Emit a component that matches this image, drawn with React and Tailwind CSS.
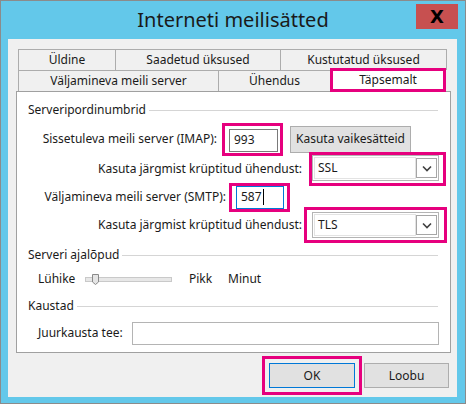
import React from 'react';

function Heading({ children, className = '' }) {
  return (
    <div className={`flex items-center h-[16px] pl-[11px] pr-[12px] ${className}`}>
      <span className="leading-none">{children}</span>
      <div className="flex-1 h-px bg-[#d5d5d5] ml-[3px]" />
    </div>
  );
}

function Chevron() {
  return (
    <svg width="10" height="7" viewBox="0 0 10 7">
      <polyline points="1,1.5 5,5.5 9,1.5" fill="none" stroke="#404040" strokeWidth="1.6" />
    </svg>
  );
}

function Select({ value }) {
  return (
    <div className="w-[127px] h-[26px] border border-[#b4b4b4] bg-white flex items-center">
      <div className="flex-1 h-[22px] ml-[1px] border border-[#e3e3e3] flex items-center pl-[3px]">
        {value}
      </div>
      <div className="w-[21px] h-[20px] mr-[1px] border border-[#a6a6a6] flex items-center justify-center">
        <Chevron />
      </div>
    </div>
  );
}

export default function App() {
  return (
    <div className="w-[466px] h-[404px] bg-[#63c8ea] border border-[#8b8b8b] flex flex-col font-['Noto_Sans',sans-serif] text-[12px] text-[#1a1a1a]">
      {/* title bar */}
      <div className="h-[38px] relative flex items-center justify-center">
        <span className="text-[20px] text-[#1a1a1a]">Interneti meilisätted</span>
        <div className="absolute right-[7px] top-[3px] w-[42px] h-[25px] bg-[#c75050] flex items-center justify-center">
          <span className="text-[18px] font-bold leading-none text-black font-['DejaVu_Sans',sans-serif]">X</span>
        </div>
      </div>

      {/* client area */}
      <div className="ml-[7px] mr-[8px] h-[358px] bg-[#f0f0f0] flex flex-col pt-[10px]">
        {/* tabs */}
        <div className="ml-[10px] w-[431px]">
          <div className="flex h-[21px]">
            <div className="w-[97px] border-t border-l border-[#acacac] flex items-center justify-center">Üldine</div>
            <div className="w-[165px] border-t border-l border-[#acacac] flex items-center justify-center">Saadetud üksused</div>
            <div className="w-[167px] border-t border-l border-r border-[#acacac] flex items-center justify-center">Kustutatud üksused</div>
          </div>
          <div className="flex h-[21px]">
            <div className="w-[200px] border-t border-l border-[#acacac] flex items-center justify-center">Väljamineva meili server</div>
            <div className="w-[112px] border-t border-l border-[#acacac] flex items-center justify-center">Ühendus</div>
            <div className="relative z-10 w-[116px] h-[24px] -mt-[2px] bg-white border-[3px] border-[#e6007e] flex items-center justify-center">
              Täpsemalt
            </div>
          </div>
        </div>

        {/* panel */}
        <div className="ml-[8px] w-[435px] h-[262px] border border-[#a0a0a0] bg-white flex flex-col pt-[10px]">
          <Heading>Serveripordinumbrid</Heading>

          <div className="mt-[6px] h-[30px] flex items-center">
            <div className="w-[200px] text-right">Sissetuleva meili server (IMAP):</div>
            <div className="ml-[5px] border-[3px] border-[#e6007e] pl-[4px] pr-[2px] pt-[3px] pb-[1px]">
              <div className="w-[49px] h-[23px] border border-[#7a7a7a] flex items-center pl-[4px]">993</div>
            </div>
            <div className="ml-[7px] w-[121px] h-[27px] bg-[#e1e1e1] border border-[#adadad] flex items-center justify-center">
              Kasuta vaikesätteid
            </div>
          </div>

          <div className="h-[30px] flex items-center">
            <div className="w-[285px] text-right">Kasuta järgmist krüptitud ühendust:</div>
            <div className="ml-[7px] border-[3px] border-[#e6007e] pr-[4px] pb-[2px]">
              <Select value="SSL" />
            </div>
          </div>

          <div className="h-[26px] flex items-center">
            <div className="w-[209px] text-right">Väljamineva meili server (SMTP):</div>
            <div className="ml-[3px] border-[3px] border-[#e6007e] pl-[4px] pr-[3px]">
              <div className="w-[48px] h-[23px] border border-[#0078d7] flex items-center pl-[4px]">
                587<span className="w-px h-[16px] bg-black ml-[1px]" />
              </div>
            </div>
          </div>

          <div className="h-[30px] flex items-center">
            <div className="w-[285px] text-right">Kasuta järgmist krüptitud ühendust:</div>
            <div className="ml-[2px] border-[3px] border-[#e6007e] px-[5px] py-[2px]">
              <Select value="TLS" />
            </div>
          </div>

          <Heading className="mt-[7px]">Serveri ajalõpud</Heading>

          <div className="mt-[8px] h-[16px] flex items-center pl-[21px]">
            <div className="w-[47px]">Lühike</div>
            <div className="relative w-[87px] h-[5px] bg-[#e7e7e7] border border-[#c9c9c9]">
              <svg className="absolute left-[6px] -top-[4px]" width="7" height="11" viewBox="0 0 7 11">
                <path d="M0.5 0.5 H6.5 V8 L3.5 10.5 L0.5 8 Z" fill="#e5e5e5" stroke="#8a8a8a" />
              </svg>
            </div>
            <div className="ml-[17px] w-[39px]">Pikk</div>
            <div>Minut</div>
          </div>

          <Heading className="mt-[11px]">Kaustad</Heading>

          <div className="mt-[7px] h-[24px] flex items-center pl-[21px]">
            <div className="w-[94px]">Juurkausta tee:</div>
            <div className="w-[307px] h-[23px] border border-[#b4b4b4]" />
          </div>
        </div>

        {/* buttons */}
        <div className="mt-[3px] flex items-center justify-end pr-[8px] gap-[2px]">
          <div className="border-[3px] border-[#e6007e] p-[4px]">
            <div className="w-[86px] h-[25px] bg-[#e1e1e1] border border-[#0078d7] flex items-center justify-center">OK</div>
          </div>
          <div className="w-[85px] h-[25px] bg-[#e1e1e1] border border-[#adadad] flex items-center justify-center">Loobu</div>
        </div>
      </div>
    </div>
  );
}
